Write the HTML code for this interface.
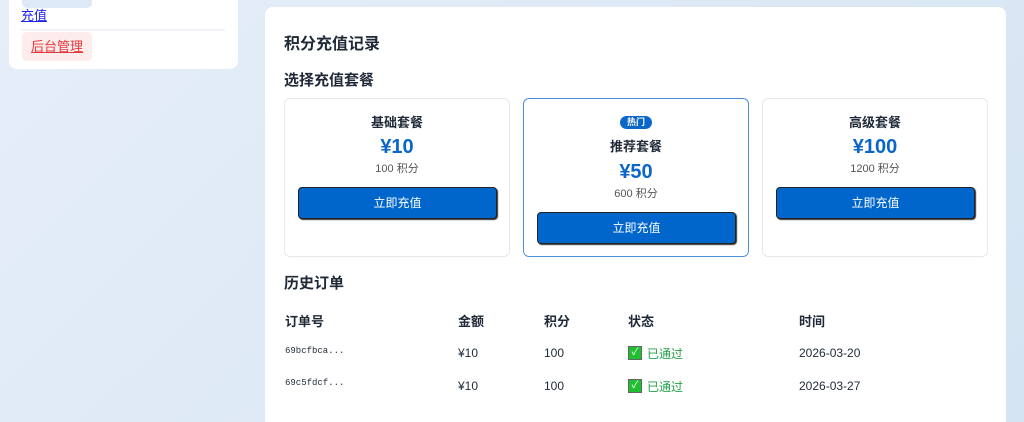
<!DOCTYPE html>
<html style="height:422px;overflow:hidden"><head><meta charset="utf-8"><style>
*{box-sizing:border-box;margin:0;padding:0}
body{width:1024px;height:422px;overflow:hidden;background:linear-gradient(135deg,#e6eef8,#d4e4f2);font-family:"Liberation Sans","Noto Sans CJK SC",sans-serif;position:relative;color:#1f2937}
.side{position:absolute;left:9px;top:-10px;width:229px;height:79px;background:#fff;border-radius:8px}
.a{position:absolute;left:21px;top:5px;font-size:13px;color:#2222ee;text-decoration:underline}
.tab{position:absolute;left:22px;top:0;width:70px;height:8px;background:#dde9f7;border-radius:0 0 5px 5px}
.hr{position:absolute;left:21px;top:29px;width:204px;height:2px;background:#f1f3f8}
.adm{position:absolute;left:22px;top:32px;width:70px;height:29px;background:#fdecec;border-radius:5px;color:#e5383b;font-size:13px;text-decoration:underline;text-align:center;line-height:29px}
.main{position:absolute;left:265px;top:7px;width:741px;height:415px;background:#fff;border-radius:8px 8px 0 0}
h1{position:absolute;left:284px;top:30px;font-size:16px;font-weight:bold}
h2{position:absolute;left:284px;font-size:15px;font-weight:bold}
.pk{position:absolute;top:98px;width:226px;height:159px;border:1px solid #e5e7eb;border-radius:6px;text-align:center}
.pk.hot{border-color:#4a90d9}
.pk>*{position:absolute;left:0;right:0}
.pk .n{font-size:13px;font-weight:bold;height:20px;line-height:20px}
.pk .p{font-size:20px;font-weight:bold;color:#0b66c9;height:26px;line-height:26px}
.pk .s{font-size:11px;color:#555;height:16px;line-height:16px}
.pk .btn{left:13px;right:auto;width:199px;height:32px;background:#0066cc;border:1px solid #222;border-radius:4px;color:#fff;font-size:12px;line-height:30px;box-shadow:1px 1px 1px #333}
.badge{left:96px!important;right:auto!important;width:32px;background:#0b66c9;color:#fff;font-size:9px;font-weight:bold;height:13px;line-height:13px;border-radius:7px}
.t{position:absolute;font-size:12px}
.th{font-weight:bold;font-size:13px}
.mono{font-family:"Liberation Mono",monospace;font-size:9px}
.ok{color:#22a045;display:flex;align-items:center;height:16px}
.ck{display:inline-block;width:14px;height:14px;background:#1fbf2f;border:1px solid #666;margin-right:5px;color:#fff;font-size:10px;line-height:12px;text-align:center}
</style></head><body>
<div class="side"></div>
<div class="tab"></div>
<div class="a">充值</div>
<div class="hr"></div>
<div class="adm">后台管理</div>
<div class="main"></div>
<h1>积分充值记录</h1>
<h2 style="top:69px">选择充值套餐</h2>
<div class="pk" style="left:284px"><div class="n" style="top:14px">基础套餐</div><div class="p" style="top:35px">¥10</div><div class="s" style="top:62px">100 积分</div><div class="btn" style="top:88px">立即充值</div></div>
<div class="pk hot" style="left:523px"><div class="badge" style="top:17px">热门</div><div class="n" style="top:38px">推荐套餐</div><div class="p" style="top:60px">¥50</div><div class="s" style="top:87px">600 积分</div><div class="btn" style="top:113px">立即充值</div></div>
<div class="pk" style="left:762px"><div class="n" style="top:14px">高级套餐</div><div class="p" style="top:35px">¥100</div><div class="s" style="top:62px">1200 积分</div><div class="btn" style="top:88px">立即充值</div></div>
<h2 style="top:272px">历史订单</h2>
<div class="t th" style="left:285px;top:311px">订单号</div>
<div class="t th" style="left:458px;top:311px">金额</div>
<div class="t th" style="left:544px;top:311px">积分</div>
<div class="t th" style="left:628px;top:311px">状态</div>
<div class="t th" style="left:799px;top:311px">时间</div>
<div class="t mono" style="left:285px;top:346px">69bcfbca...</div>
<div class="t" style="left:458px;top:346px">¥10</div>
<div class="t" style="left:544px;top:346px">100</div>
<div class="t ok" style="left:628px;top:345px"><span class="ck">✓</span>已通过</div>
<div class="t" style="left:799px;top:346px">2026-03-20</div>
<div class="t mono" style="left:285px;top:378px">69c5fdcf...</div>
<div class="t" style="left:458px;top:379px">¥10</div>
<div class="t" style="left:544px;top:379px">100</div>
<div class="t ok" style="left:628px;top:378px"><span class="ck">✓</span>已通过</div>
<div class="t" style="left:799px;top:379px">2026-03-27</div>
</body></html>
